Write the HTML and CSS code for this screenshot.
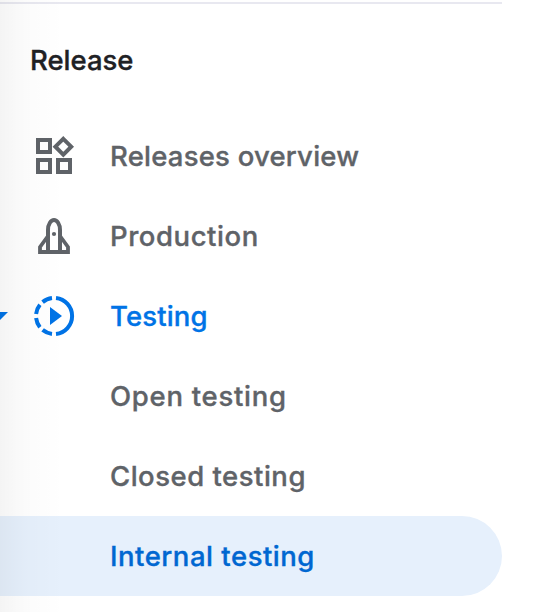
FILE: index.html
```
<!DOCTYPE html>
<html lang="en">
<head>
<meta charset="utf-8">
<title>Release</title>
<link rel="stylesheet" href="styles.css">
</head>
<body>
<nav class="sidebar">
  <h2 class="heading">Release</h2>
  <a class="item">
    <svg class="icon" viewBox="0 0 48 48" fill="none" stroke="currentColor" stroke-width="4"><path d="M8 8h12v12H8zM8 28h12v12H8zM28 28h12v12H28zM33.3 6.8l7.9 7.9-7.9 7.9-7.9-7.9z"/></svg>
    <span class="t-overview">Releases overview</span>
  </a>
  <a class="item">
    <svg class="icon" viewBox="0 0 48 48" fill="none" stroke="currentColor" stroke-width="4"><path d="M18 40V18C18 12 21 8 24 8s6 4 6 10v22"/><path d="M18 24l-8 11v5h28v-5l-8-11" stroke-width="3.8"/><circle cx="24" cy="22" r="2.1" fill="currentColor" stroke="none"/></svg>
    <span class="t-production">Production</span>
  </a>
  <a class="item item-open">
    <svg class="caret" viewBox="0 0 8 8"><path d="M0 0h8L0 8z" fill="currentColor"/></svg>
    <svg class="icon" viewBox="0 0 48 48"><path d="M26 6.1a18 18 0 0 1 0 35.8M22 6.1a18 18 0 0 0-9.4 4M9.9 12.8A18 18 0 0 0 6.1 22M6.1 26a18 18 0 0 0 3.8 9.2M12.6 37.9a18 18 0 0 0 9.4 4" fill="none" stroke="currentColor" stroke-width="4"/><path d="M20 15l12 9-12 9z" fill="currentColor"/></svg>
    <span class="t-testing">Testing</span>
  </a>
  <a class="item child"><span class="t-open">Open testing</span></a>
  <a class="item child"><span class="t-closed">Closed testing</span></a>
  <a class="item child selected"><span class="t-internal">Internal testing</span></a>
</nav>
</body>
</html>
```
FILE: styles.css
```
body {
  margin: 0;
  background: #fff;
  font-family: Inter, "Open Sans", sans-serif;
  font-size: 27.5px;
  font-weight: 500;
  -webkit-text-stroke: .35px currentColor;
  color: #5f6368;
}
.sidebar {
  position: relative;
  box-sizing: border-box;
  width: 542px;
  height: 612px;
  padding: 2px 40px 0 0;
  overflow: hidden;
}
.sidebar::after {
  content: "";
  position: absolute;
  inset: 0 auto 0 0;
  width: 64px;
  background: linear-gradient(to right, rgba(0,0,0,.042), rgba(0,0,0,.014) 40%, rgba(0,0,0,0));
}
.heading {
  box-sizing: border-box;
  height: 114px;
  margin: 0;
  padding: 36px 0 0 30px;
  border-top: 2px solid #e8e8f0;
  font-size: inherit;
  font-weight: 500;
  line-height: 40px;
  color: #202124;
}
.item {
  position: relative;
  display: flex;
  align-items: center;
  gap: 32px;
  height: 80px;
  padding-left: 30px;
  white-space: nowrap;
}
.icon { width: 48px; height: 48px; }
.item-open { color: #0073e6; }
.caret {
  position: absolute;
  left: 0;
  top: 36px;
  width: 8px;
  height: 8px;
}
.child { padding-left: 110px; }
.selected {
  background: #e6f0fc;
  border-radius: 0 40px 40px 0;
  color: #0067d1;
}
.t-overview { letter-spacing: .22px; }
.t-production { letter-spacing: .55px; }
.t-testing { letter-spacing: .15px; }
.t-open { letter-spacing: .73px; }
.t-closed { letter-spacing: .5px; }
.t-internal { letter-spacing: .52px; }
```
